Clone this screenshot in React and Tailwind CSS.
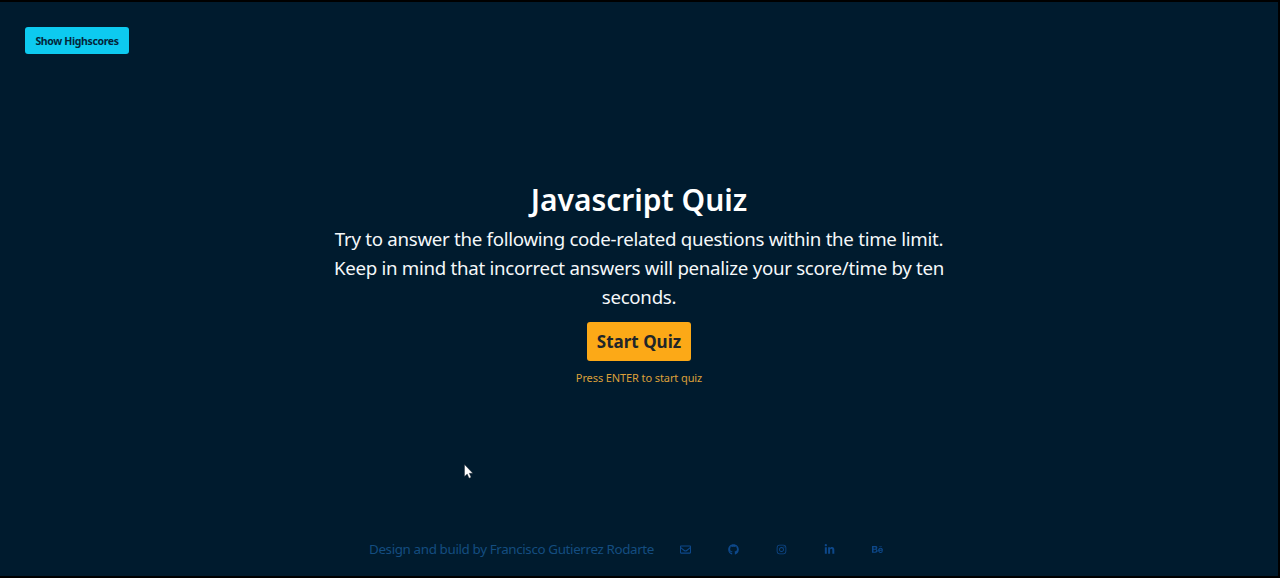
import { FaRegEnvelope, FaGithub, FaInstagram, FaLinkedinIn, FaBehance } from "react-icons/fa";

const links = [
  { label: "Email", Icon: FaRegEnvelope },
  { label: "GitHub", Icon: FaGithub },
  { label: "Instagram", Icon: FaInstagram },
  { label: "LinkedIn", Icon: FaLinkedinIn },
  { label: "Behance", Icon: FaBehance },
];

export default function App() {
  return (
    <div className="h-[578px] w-[1280px] overflow-hidden bg-black pt-[2px] pr-[2px] pb-[2px] font-['Noto_Sans',sans-serif]">
      <div className="relative flex h-full flex-col bg-[#001b2e]">
        <header className="flex h-[52px] shrink-0 items-start pt-[25px] pl-[25px]">
          <button className="flex h-[27px] w-[104px] items-center justify-center rounded-[3px] bg-[#0dcaf0] pt-[2px] text-[10.5px] font-bold tracking-[-0.36px] whitespace-nowrap text-[#03263b]">
            Show Highscores
          </button>
        </header>
        <main className="flex flex-1 flex-col items-center pt-[127px] text-center">
          <h1 className="text-[30px] leading-[38px] font-semibold whitespace-nowrap text-white">Javascript Quiz</h1>
          <div className="mt-[6px] text-[18.7px] leading-[28.8px] tracking-[-0.29px] whitespace-nowrap text-[#f5f8fa]">
            <p>Try to answer the following code-related questions within the time limit.</p>
            <p>Keep in mind that incorrect answers will penalize your score/time by ten</p>
            <p>seconds.</p>
          </div>
          <button className="mt-[11px] flex h-[39px] w-[104px] items-center justify-center rounded-[3px] bg-[#fca917] text-[17px] font-bold whitespace-nowrap text-[#212529]">
            Start Quiz
          </button>
          <p className="mt-[9px] text-[11px] leading-4 tracking-[-0.1px] whitespace-nowrap text-[#dca03a]">Press ENTER to start quiz</p>
        </main>
        <footer className="flex h-[52px] shrink-0 items-center pl-[369px] text-[#0d488a]">
          <p className="w-[310.5px] pb-[2px] text-[13.4px] leading-5 tracking-[-0.37px] whitespace-nowrap text-[#144d80]">
            Design and build by Francisco Gutierrez Rodarte
          </p>
          <nav className="flex pb-px">
            {links.map(({ label, Icon }) => (
              <a key={label} aria-label={label} className="flex w-12">
                <Icon className="size-[11px]" />
              </a>
            ))}
          </nav>
        </footer>
        <svg className="absolute top-[462px] left-[464px] h-[16px] w-[10px]" viewBox="0 0 10 16">
          <path d="M.5.5v12l2.7-2.5 1.9 4.2 2-.9-1.9-4h3.6z" fill="white" stroke="#17202a" strokeWidth=".4" />
        </svg>
      </div>
    </div>
  );
}
